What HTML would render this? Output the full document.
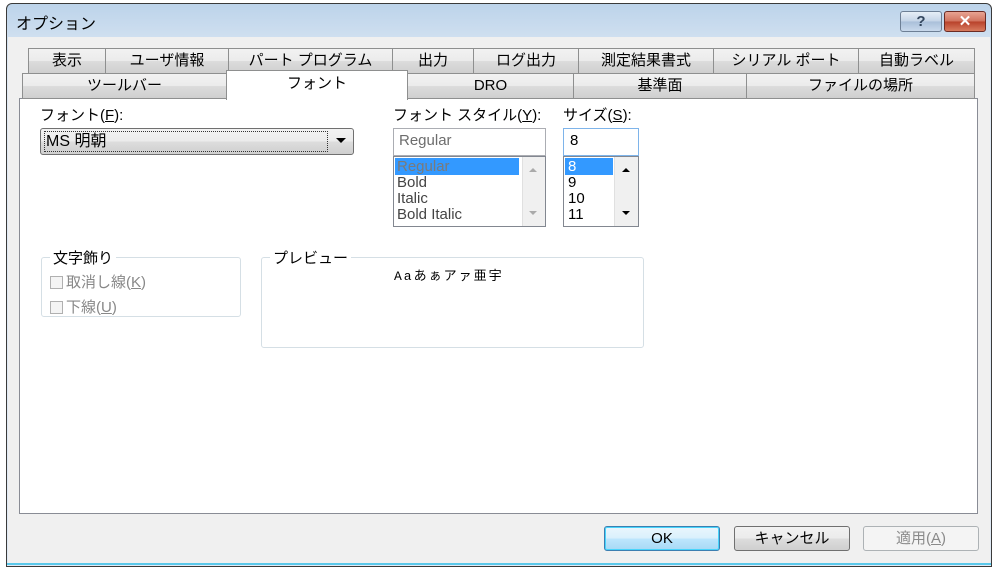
<!DOCTYPE html>
<html><head><meta charset="utf-8"><style>
*{box-sizing:border-box;margin:0;padding:0}
body{width:1000px;height:573px;background:#fff;position:relative;overflow:hidden;font-family:"Liberation Sans","Noto Sans CJK JP",sans-serif;font-size:15px;color:#000}
.a{position:absolute}
.win{left:6px;top:3px;width:986px;height:564px;border:1px solid #3a3a3a;border-radius:6px 6px 0 0;background:linear-gradient(#bcd3ea,#d0e0f0 35px,#dfe9f4 60px,#dfe9f4);}
.inner{left:8px;top:37px;width:982px;height:526px;background:#f0f0f0}
.tab{position:absolute;height:26px;border:1px solid #8e8f8f;background:linear-gradient(#f2f2f2,#ebebeb 50%,#dcdcdc 51%,#cfcfcf);text-align:center;line-height:24px;font-size:15px}
.panel{left:19px;top:98px;width:959px;height:416px;background:#fff;border:1px solid #898c95}
.btn{position:absolute;height:25px;border:1px solid #707070;border-radius:3px;background:linear-gradient(#f2f2f2,#ebebeb 50%,#dddddd 51%,#cfcfcf);text-align:center;line-height:23px}
.lb{border:1px solid #828790;background:#fff}
.grp{border:1px solid #d5dfe5;border-radius:3px}
.cb{display:inline-block;width:13px;height:13px;border:1px solid #b0b0b0;background:#f4f4f4;vertical-align:-2px;margin-right:3px}
</style></head><body>
<div class="a win"></div>
<div class="a" style="left:16px;top:10px;font-size:16px">オプション</div>
<div class="a" style="left:900px;top:11px;width:42px;height:21px;border:1px solid #6d7f95;border-radius:3px;background:linear-gradient(#e6eef7,#c3d3e6 50%,#a9bfd9 51%,#c9d9ec);text-align:center;font-weight:bold;color:#33465e;line-height:19px">?</div>
<div class="a" style="left:944px;top:11px;width:42px;height:21px;border:1px solid #6b2b24;border-radius:3px;background:linear-gradient(#e8a493,#d0725d 50%,#b8412a 51%,#d87b5f);text-align:center;font-weight:bold;color:#fff;line-height:19px">✕</div>
<div class="a inner"></div>
<div class="a panel"></div>
<!-- row 1 -->
<div class="tab" style="left:28px;top:48px;width:78px">表示</div>
<div class="tab" style="left:105px;top:48px;width:124px">ユーザ情報</div>
<div class="tab" style="left:228px;top:48px;width:165px">パート プログラム</div>
<div class="tab" style="left:392px;top:48px;width:82px">出力</div>
<div class="tab" style="left:473px;top:48px;width:106px">ログ出力</div>
<div class="tab" style="left:578px;top:48px;width:136px">測定結果書式</div>
<div class="tab" style="left:713px;top:48px;width:146px">シリアル ポート</div>
<div class="tab" style="left:858px;top:48px;width:117px">自動ラベル</div>
<!-- row 2 -->
<div class="tab" style="left:22px;top:73px;width:205px">ツールバー</div>
<div class="tab" style="left:407px;top:73px;width:167px">DRO</div>
<div class="tab" style="left:573px;top:73px;width:174px">基準面</div>
<div class="tab" style="left:746px;top:73px;width:229px">ファイルの場所</div>
<div class="tab" style="left:226px;top:70px;width:182px;height:30px;background:#fff;border-bottom:none;line-height:26px">フォント</div>
<!-- font -->
<div class="a" style="left:40px;top:104px">フォント(<u>F</u>):</div>
<div class="a" style="left:40px;top:128px;width:314px;height:27px;border:1px solid #707070;border-radius:3px;background:linear-gradient(#f2f2f2,#ebebeb 50%,#dddddd 51%,#cfcfcf)"></div>
<div class="a" style="left:44px;top:131px;width:284px;height:21px;border:1px dotted #333;line-height:19px;padding-left:1px;font-size:16px">MS 明朝</div>
<div class="a" style="left:336px;top:138px;width:0;height:0;border-left:5px solid transparent;border-right:5px solid transparent;border-top:5px solid #000"></div>
<!-- style -->
<div class="a" style="left:393px;top:104px">フォント スタイル(<u>Y</u>):</div>
<div class="a lb" style="left:393px;top:128px;width:153px;height:28px;border-color:#abadb3;color:#6d6d6d;padding:3px 5px">Regular</div>
<div class="a lb" style="left:393px;top:156px;width:153px;height:71px"></div>
<div class="a" style="left:395px;top:158px;width:124px;height:17px;background:#3399ff"></div>
<div class="a" style="left:397px;top:159px;line-height:16px;color:#000"><span style="color:#7a7a7a">Regular</span><br><span style="color:#444">Bold<br>Italic<br>Bold Italic</span></div>
<div class="a" style="left:522px;top:157px;width:23px;height:69px;background:#f0f0f0;border-left:1px solid #e0e0e0"></div>
<div class="a" style="left:529px;top:168px;border-left:4px solid transparent;border-right:4px solid transparent;border-bottom:4px solid #aaa"></div>
<div class="a" style="left:529px;top:211px;border-left:4px solid transparent;border-right:4px solid transparent;border-top:4px solid #aaa"></div>
<!-- size -->
<div class="a" style="left:563px;top:104px">サイズ(<u>S</u>):</div>
<div class="a lb" style="left:563px;top:128px;width:76px;height:28px;border-color:#7eb4ea;padding:3px 6px">8</div>
<div class="a lb" style="left:563px;top:156px;width:76px;height:71px"></div>
<div class="a" style="left:565px;top:158px;width:48px;height:17px;background:#3399ff"></div>
<div class="a" style="left:568px;top:159px;line-height:16px"><span style="color:#fff">8</span><br>9<br>10<br>11</div>
<div class="a" style="left:614px;top:157px;width:24px;height:69px;background:#f0f0f0;border-left:1px solid #e0e0e0"></div>
<div class="a" style="left:622px;top:168px;border-left:4px solid transparent;border-right:4px solid transparent;border-bottom:4px solid #000"></div>
<div class="a" style="left:622px;top:211px;border-left:4px solid transparent;border-right:4px solid transparent;border-top:4px solid #000"></div>
<!-- groups -->
<div class="a grp" style="left:41px;top:257px;width:200px;height:60px"></div>
<div class="a" style="left:50px;top:247px;background:#fff;padding:0 3px">文字飾り</div>
<div class="a" style="left:50px;top:271px;color:#888"><span class="cb"></span>取消し線(<u>K</u>)</div>
<div class="a" style="left:50px;top:296px;color:#888"><span class="cb"></span>下線(<u>U</u>)</div>
<div class="a grp" style="left:261px;top:257px;width:383px;height:91px"></div>
<div class="a" style="left:270px;top:247px;background:#fff;padding:0 3px">プレビュー</div>
<div class="a" style="left:394px;top:265px;font-size:13px;letter-spacing:2px;font-family:'Liberation Mono','Noto Sans CJK JP',monospace">Aaあぁアァ亜宇</div>
<!-- buttons -->
<div class="btn" style="left:604px;top:526px;width:116px;border-color:#3c7fb1;background:linear-gradient(#eaf6fd,#d9f0fc 50%,#bee6fd 51%,#a7d9f5);box-shadow:inset 0 0 0 1px #48d4fb">OK</div>
<div class="btn" style="left:734px;top:526px;width:116px">キャンセル</div>
<div class="btn" style="left:863px;top:526px;width:116px;border-color:#adb2b5;background:#f4f4f4;color:#8a8a8a">適用(<u>A</u>)</div>
<div class="a" style="left:7px;top:563px;width:984px;height:2px;background:#5ac8ea"></div>
</body></html>
